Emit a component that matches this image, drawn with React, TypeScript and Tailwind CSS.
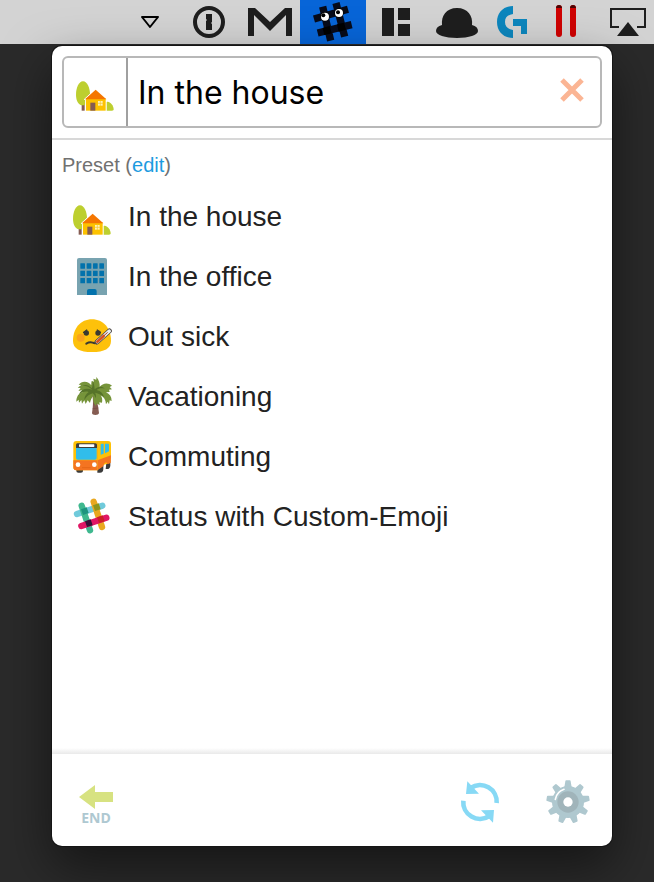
import { useState, type ReactNode } from "react";

function HouseIcon() {
  return (
    <svg viewBox="36 18 120 120" className="size-10 shrink-0" aria-hidden="true">
      <rect x="56" y="115" width="9" height="19" fill="#855c52" />
      <path d="M60 46c13 0 21 20 21 40 0 20-8 32-21 32S39 106 39 86s8-40 21-40z" fill="#bdcf2f" />
      <path d="M131 108c8-4 21 10 21 22 0 3-2 4-5 4h-16z" fill="#bdcf2f" />
      <path d="M64 100l34-31 35 31-5 3v31H68v-31z" fill="#fff" stroke="#fff" strokeWidth="3" />
      <rect x="69" y="97" width="59" height="37" fill="#fdc200" />
      <path d="M98 71l32 29H66z" fill="#f57601" />
      <rect x="82" y="110" width="15" height="24" fill="#855c52" />
      <rect x="105" y="105" width="14" height="14" fill="#fff3b8" />
      <path d="M112 104v16M104 112h16" stroke="#f5c32c" strokeWidth="2" />
    </svg>
  );
}

function OfficeIcon() {
  return (
    <svg viewBox="36 198 120 120" className="size-10 shrink-0" aria-hidden="true">
      <path d="M57 204h78q6 0 6 6v105H51V210q0-6 6-6z" fill="#78a3b0" />
      {[220, 242, 264].map((y) =>
        [61, 80, 99, 118].map((x) => (
          <rect key={`${x}-${y}`} x={x} y={y} width="14" height="16" rx="1" fill="#0272ac" />
        )),
      )}
      <path d="M81 315v-12q0-6 6-6h17q6 0 6 6v12z" fill="#0272ac" />
    </svg>
  );
}

function SickIcon() {
  return (
    <svg viewBox="36 18 120 120" className="size-10 shrink-0" aria-hidden="true">
      <path d="M96 28c34 0 57 27 57 64 0 24-20 34-57 34s-57-10-57-34c0-37 23-64 57-64z" fill="#fdc10b" />
      <circle cx="62" cy="83" r="12" fill="#faa41b" />
      <ellipse cx="79" cy="69" rx="8" ry="8" fill="#3a3a32" />
      <ellipse cx="114" cy="69" rx="8" ry="8" fill="#3a3a32" />
      <path d="M69 68q8-2 12-9M111 59q4 7 12 9" stroke="#3a3a32" strokeWidth="4" fill="none" />
      <path d="M79 101q10-6 19-3 12 5 21-7" stroke="#3a3a32" strokeWidth="6" fill="none" strokeLinecap="round" />
      <path d="M111 96l37-33" stroke="#4c4643" strokeWidth="15" strokeLinecap="round" />
      <path d="M112 95l36-32" stroke="#e9eef0" strokeWidth="10" strokeLinecap="round" />
      <path d="M112 95l19-17" stroke="#d9501e" strokeWidth="8" strokeLinecap="round" />
      <path d="M131 78l12-11" stroke="#b3412a" strokeWidth="3" />
    </svg>
  );
}

function PalmIcon() {
  return (
    <svg viewBox="36 198 120 120" className="size-10 shrink-0" aria-hidden="true">
      <path d="M97 236c11 22 18 48 20 73 0 8-22 8-21 0 4-24 5-46-3-67z" fill="#855c52" />
      <path d="M100 282l13-2M98 296l17-2M101 268l8-2" stroke="#75483f" strokeWidth="2" />
      <path
        d="M97 230c-8-16-30-21-41-6l8 1-11 8 9 1-7 9 10-2 4 5c-13 3-20 14-20 29l7-6 1 9 7-8 2 11 7-10 4 11 6-11 7 8c2-9 5-16 10-21-2 13 0 23 8 30l2-8 9 6-1-9 8 1c2-9 0-17-4-22 10 5 15 14 16 27l5-8 4 8 2-12 6 2c0-13-6-21-17-26l11-1-2-7 9-1-7-7 7-4c-12-10-28-8-37 4 1-12-2-21-10-30l0 8-9-3 2 9-7-2c-2 8-1 15-1 24z"
        fill="#76943a"
      />
      <path
        d="M97 240c-16-8-33-3-40 12 12-7 20-9 29-6-9 7-13 15-13 24 7-11 15-17 25-20 4 3 7 8 9 15 2-7 1-13-2-17 11 2 20 7 27 14-2-11-9-19-22-22 6-5 14-7 24-4-8-8-21-7-30 2-1-11-2-18-6-25 0 10 0 16-3 22-7-9-17-12-27-9 13 2 22 6 29 14z"
        fill="#567329"
      />
    </svg>
  );
}

function BusIcon() {
  return (
    <svg viewBox="36 18 120 120" className="size-10 shrink-0" aria-hidden="true">
      <path d="M49 116h20v7q0 5-6 5h-8q-6 0-6-5zM112 100h18v16q0 12-10 12h-8zM140 90h11v17q-1 10-10 10h-4z" fill="#3b3b3b" />
      <path d="M49 33h95q9 0 9 9v39l-2 17-23 8-16 15H49q-9 0-9-9V42q0-9 9-9z" fill="#fec107" />
      <path d="M40 91h72l41-15-1 23-10 4c0-9-10-8-12 6l-18 12H49q-9 0-9-9z" fill="#f47421" />
      <path d="M112 37v84" stroke="#f2a71b" strokeWidth="2" />
      <path d="M48 53h62v31q0 5-5 5H53q-5 0-5-5z" fill="#31bdeb" />
      <path d="M52 40h54q5 0 5 5v9H48v-9q0-5 4-5z" fill="#3c3d3e" />
      <rect x="57" y="43" width="46" height="8" rx="2" fill="#fff" />
      <path d="M122 44q0-3 3-3h6v30l-9 3zM135 41h9q3 0 3 3v20l-12 6z" fill="#31bdeb" />
      <circle cx="54" cy="104" r="7" fill="#fff" />
      <circle cx="103" cy="104" r="7" fill="#fff" />
      <path d="M66 113h26" stroke="#df6014" strokeWidth="2" />
    </svg>
  );
}

function SlackIcon() {
  return (
    <svg viewBox="36 198 120 120" className="size-10 shrink-0" aria-hidden="true">
      <g strokeWidth="19" strokeLinecap="round">
        <path d="M51 252l76-25" stroke="#70cadb" />
        <path d="M101 215l25 76" stroke="#e9a820" />
        <path d="M65 227l25 74" stroke="#3fb88f" />
        <path d="M64 288l75-25" stroke="#e01765" />
      </g>
      <path d="M63 238l17-6 6 17-17 6z" fill="#1d947e" />
      <path d="M99 226l17-6 6 18-17 5z" fill="#8e951c" />
      <path d="M75 274l17-6 6 18-17 5z" fill="#361238" />
      <path d="M111 262l17-6 6 18-17 5z" fill="#cc1f27" />
    </svg>
  );
}

const presets: { label: string; icon: ReactNode }[] = [
  { label: "In the house", icon: <HouseIcon /> },
  { label: "In the office", icon: <OfficeIcon /> },
  { label: "Out sick", icon: <SickIcon /> },
  { label: "Vacationing", icon: <PalmIcon /> },
  { label: "Commuting", icon: <BusIcon /> },
  { label: "Status with Custom-Emoji", icon: <SlackIcon /> },
];

function MenuBar() {
  return (
    <header className="flex h-11 justify-end bg-[#d3d3d3]">
      <button type="button" aria-label="Show more items">
        <svg viewBox="124 0 52 44" className="h-11 w-[52px]">
          <path d="M142 17h16l-8 10z" fill="none" stroke="#000" strokeWidth="2" strokeLinejoin="round" />
        </svg>
      </button>
      <button type="button" aria-label="Password manager">
        <svg viewBox="176 0 66 44" className="h-11 w-[66px]">
          <circle cx="209" cy="22" r="14" fill="none" stroke="#1e1e1e" strokeWidth="4" />
          <path d="M206 14h6v8l-1 1 1 1v6h-6v-9l1-1-1-1z" fill="#1e1e1e" />
        </svg>
      </button>
      <button type="button" aria-label="Mail">
        <svg viewBox="242 0 58 44" className="h-11 w-[58px]">
          <path d="M248 36V8h7l15 14 15-14h7v28h-6V15l-16 16-16-16v21z" fill="#1e1e1e" />
        </svg>
      </button>
      <button type="button" aria-label="Status" className="bg-[#0765d8]">
        <svg viewBox="0 0 198 132" className="h-11 w-[66px]">
          <g stroke="#070b1a" strokeWidth="22">
            <path d="M68 20l24 102M108 9l26 101M42 57l102-29M53 99l102-25" />
          </g>
          <g fill="#000">
            <path d="M68 84l21-6 6 22-22 5zM111 73l21-5 6 21-22 6z" />
            <circle cx="75" cy="50" r="14" />
            <circle cx="117" cy="39" r="14" />
          </g>
          <circle cx="75" cy="50" r="12" fill="#fff" />
          <circle cx="117" cy="39" r="12" fill="#fff" />
          <circle cx="70" cy="46" r="6" fill="#000" />
          <circle cx="114" cy="37" r="6" fill="#000" />
        </svg>
      </button>
      <button type="button" aria-label="Window layout">
        <svg viewBox="366 0 60 44" className="h-11 w-[60px]">
          <path d="M382 8h12v28h-12zM398 8h12v12h-12zM398 24h12v12h-12z" fill="#1e1e1e" />
        </svg>
      </button>
      <button type="button" aria-label="Bowler hat">
        <svg viewBox="426 0 62 44" className="h-11 w-[62px]">
          <path d="M442 25c-1-9 4-17 15-17s16 8 15 17c4 1 6 3 6 6 0 4-9 7-21 7s-21-3-21-7c0-3 2-5 6-6z" fill="#1e1e1e" />
        </svg>
      </button>
      <button type="button" aria-label="Gaming devices">
        <svg viewBox="488 0 48 44" className="h-11 w-12">
          <path d="M513 6v8c-5 1-8 3-8 8s3 7 8 8v8c-10 0-16-7-16-16s6-16 16-16z" fill="#0d86bd" />
          <path d="M513 19h14v15h-6v-8h-8z" fill="#0d86bd" />
        </svg>
      </button>
      <button type="button" aria-label="Virtual machine">
        <svg viewBox="536 0 60 44" className="h-11 w-[60px]">
          <rect x="556" y="5" width="6" height="32" rx="3" fill="#cf0202" />
          <rect x="570" y="5" width="6" height="32" rx="3" fill="#cf0202" />
          <path d="M556 8c0-4 6-4 6 0M570 8c0-4 6-4 6 0" fill="#4a0606" />
        </svg>
      </button>
      <button type="button" aria-label="Screen mirroring">
        <svg viewBox="596 0 58 44" className="h-11 w-[58px]">
          <path d="M619 27h-8V9h34v18h-8" fill="none" stroke="#1e1e1e" strokeWidth="2" />
          <path d="M628 22l11 14h-22z" fill="#1e1e1e" />
        </svg>
      </button>
    </header>
  );
}

function GearIcon() {
  return (
    <svg viewBox="-66 -66 132 132" className="size-11" aria-hidden="true">
      <g fill="#afc8cf">
        {[0, 40, 80, 120, 160, 200, 240, 280, 320].map((angle) => (
          <path key={angle} d="M-11-44l3-18q0-3 3-3H5q3 0 3 3l3 18z" transform={`rotate(${angle})`} />
        ))}
        <circle r="48" />
      </g>
      <circle r="32" fill="#a0b4ba" />
      <path d="M-38-8A39 39 0 0 1-12-38" fill="none" stroke="#fff" strokeWidth="5" strokeLinecap="round" />
      <circle r="14" fill="#fff" />
    </svg>
  );
}

export default function App() {
  const [status, setStatus] = useState("In the house");

  return (
    <div className="flex min-h-screen flex-col bg-[#2a2a2a] font-['Liberation_Sans',Arial,sans-serif]">
      <MenuBar />
      <main className="mt-0.5 mr-[42px] mb-9 ml-[52px] flex flex-1 flex-col overflow-hidden rounded-[10px] bg-white shadow-[0_0_0_1px_#151515,0_20px_50px_rgba(0,0,0,0.5)]">
        <form className="border-b-2 border-[#d8d8d8] p-2.5" onSubmit={(e) => e.preventDefault()}>
          <div className="flex h-[72px] items-stretch rounded-md border-2 border-[#b8b8b8]">
            <button
              type="button"
              aria-label="Choose emoji"
              className="flex w-16 items-center justify-center border-r-2 border-[#a0a0a0]"
            >
              <HouseIcon />
            </button>
            <input
              aria-label="Status text"
              value={status}
              onChange={(e) => setStatus(e.target.value)}
              className="min-w-0 flex-1 pt-0.5 pl-2.5 font-[Inter,sans-serif] text-[32px] text-black outline-none"
            />
            <button type="button" aria-label="Clear status" className="px-4 pb-1" onClick={() => setStatus("")}>
              <svg viewBox="0 0 24 24" className="size-6">
                <path d="M2 2l20 20M22 2L2 22" stroke="#fbb594" strokeWidth="5" />
              </svg>
            </button>
          </div>
        </form>

        <section className="flex-1">
          <h2 className="px-2.5 pt-3 pb-2 text-[20px] leading-[26px] text-[#717171]">
            Preset (
            <a href="#edit" className="text-[#1c9be0]">
              edit
            </a>
            )
          </h2>
          <ul>
            {presets.map(({ label, icon }) => (
              <li key={label}>
                <button
                  type="button"
                  onClick={() => setStatus(label)}
                  className="flex h-[60px] w-full items-center gap-4 px-5 text-left text-[28px] text-[#222]"
                >
                  {icon}
                  <span className="pt-0.5">{label}</span>
                </button>
              </li>
            ))}
          </ul>
        </section>

        <div className="h-1.5 bg-linear-to-b from-white to-[#e9e9e9]" />
        <footer className="flex h-[92px] items-center gap-[46px] pt-1 pr-[22px] pl-[27px]">
          <button type="button" className="mr-auto flex flex-col items-center pt-2">
            <svg viewBox="0 0 34 24" className="h-6 w-[34px]" aria-hidden="true">
              <path d="M0 12L16 0v7h18v10H16v7z" fill="#d7e281" />
            </svg>
            <span className="font-['Open_Sans',sans-serif] text-[14px] leading-[18px] font-bold text-[#aec8d1]">END</span>
          </button>
          <button type="button" aria-label="Refresh">
            <svg viewBox="60 120 120 132" className="h-11 w-10">
              <g fill="none" stroke="#87d9f5" strokeWidth="14">
                <path d="M92 144A50 50 0 0 1 170 189" />
                <path d="M70 182A50 50 0 0 0 148 228" />
              </g>
              <path d="M82 124l-4 38 39-1zM159 248l3-38-39 1z" fill="#87d9f5" />
            </svg>
          </button>
          <button type="button" aria-label="Settings">
            <GearIcon />
          </button>
        </footer>
      </main>
    </div>
  );
}
